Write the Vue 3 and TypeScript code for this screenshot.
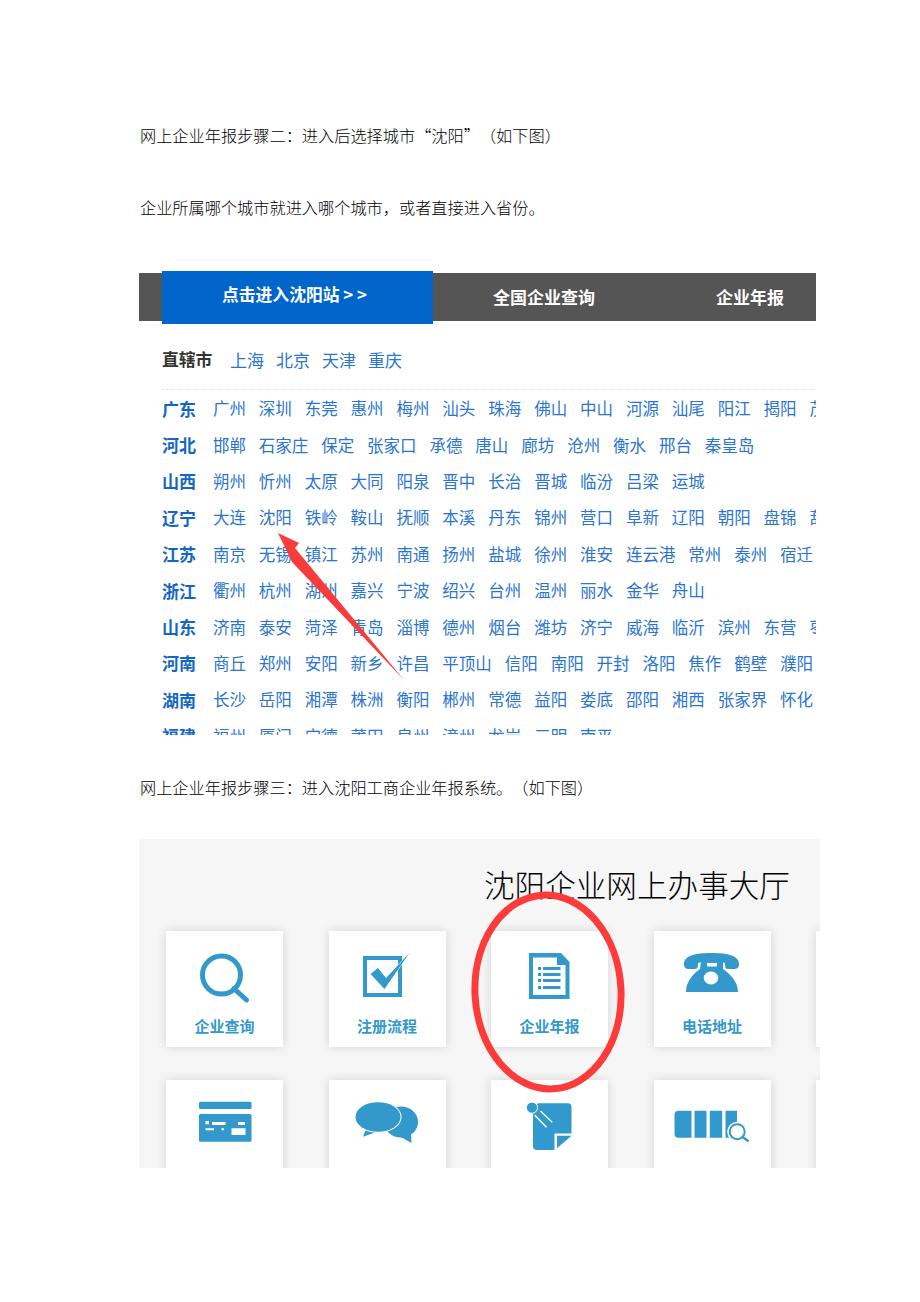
<script setup lang="ts">
interface Region { name: string; cities: string[] }
const split = (s: string) => s.split(' ')
const direct = split('上海 北京 天津 重庆')
const regions: Region[] = [
  { name: '广东', cities: split('广州 深圳 东莞 惠州 梅州 汕头 珠海 佛山 中山 河源 汕尾 阳江 揭阳 茂名') },
  { name: '河北', cities: split('邯郸 石家庄 保定 张家口 承德 唐山 廊坊 沧州 衡水 邢台 秦皇岛') },
  { name: '山西', cities: split('朔州 忻州 太原 大同 阳泉 晋中 长治 晋城 临汾 吕梁 运城') },
  { name: '辽宁', cities: split('大连 沈阳 铁岭 鞍山 抚顺 本溪 丹东 锦州 营口 阜新 辽阳 朝阳 盘锦 葫芦岛') },
  { name: '江苏', cities: split('南京 无锡 镇江 苏州 南通 扬州 盐城 徐州 淮安 连云港 常州 泰州 宿迁') },
  { name: '浙江', cities: split('衢州 杭州 湖州 嘉兴 宁波 绍兴 台州 温州 丽水 金华 舟山') },
  { name: '山东', cities: split('济南 泰安 菏泽 青岛 淄博 德州 烟台 潍坊 济宁 威海 临沂 滨州 东营 枣庄') },
  { name: '河南', cities: split('商丘 郑州 安阳 新乡 许昌 平顶山 信阳 南阳 开封 洛阳 焦作 鹤壁 濮阳') },
  { name: '湖南', cities: split('长沙 岳阳 湘潭 株洲 衡阳 郴州 常德 益阳 娄底 邵阳 湘西 张家界 怀化') },
  { name: '福建', cities: split('福州 厦门 宁德 莆田 泉州 漳州 龙岩 三明 南平') }
]
</script>

<template>
  <div class="page" lang="zh-CN">
    <p class="line">网上企业年报步骤二：进入后选择城市“沈阳”（如下图）</p>
    <p class="line second">企业所属哪个城市就进入哪个城市，或者直接进入省份。</p>

    <section class="shot-city">
      <nav class="nav">
        <div class="tab">点击进入沈阳站 &gt; &gt;</div>
        <div class="nav-item first">全国企业查询</div>
        <div class="nav-item">企业年报</div>
      </nav>
      <div class="direct">
        <strong>直辖市</strong>
        <span v-for="c in direct" :key="c">{{ c }}</span>
      </div>
      <div class="rows">
        <div v-for="r in regions" :key="r.name" class="row">
          <strong>{{ r.name }}</strong>
          <span v-for="c in r.cities" :key="c">{{ c }}</span>
        </div>
      </div>
      <svg class="arrow" viewBox="0 0 160 170" width="160" height="170">
        <path d="M14 4 L35 14 L31 19 L140 151 L28 33 Z" fill="#f83c3c" />
      </svg>
    </section>

    <p class="line third">网上企业年报步骤三：进入沈阳工商企业年报系统。（如下图）</p>

    <section class="shot-hall">
      <h1>沈阳企业网上办事大厅</h1>
      <div class="grid">
        <div class="card">
          <svg viewBox="0 0 60 60" width="60" height="60"><circle cx="26.5" cy="26" r="19" fill="none" stroke="#3399cc" stroke-width="5"/><path d="M39 39.5 L51.5 51" stroke="#3399cc" stroke-width="5" stroke-linecap="round"/></svg>
          <b>企业查询</b>
        </div>
        <div class="card">
          <svg viewBox="0 0 60 60" width="60" height="60"><path d="M6 7 H45 V48 H6 Z M10 11 V44 H41 V11 Z" fill="#3399cc" fill-rule="evenodd"/><path d="M13.5 25 L21 19 L29 29 L52.5 4 L27.5 40 Z" fill="#3399cc" stroke="#fff" stroke-width="1" paint-order="stroke"/></svg>
          <b>注册流程</b>
        </div>
        <div class="card">
          <svg viewBox="0 0 60 60" width="60" height="60"><path d="M9 4 H41 L49.5 13 V50 H9 Z" fill="#3399cc"/><path d="M13 8.5 H37 V16 H45.5 V46 H13 Z" fill="#fff"/><path d="M18 18 H21 V21 H18 Z M23 18 H40.5 V21 H23 Z M18 24 H21 V27 H18 Z M23 24 H40.5 V27 H23 Z M18 30 H21 V33 H18 Z M23 30 H40.5 V33 H23 Z M18 37 H21 V40 H18 Z M23 37 H40.5 V40 H23 Z" fill="#3399cc"/></svg>
          <b>企业年报</b>
        </div>
        <div class="card">
          <svg viewBox="0 0 60 60" width="60" height="60"><path d="M2 15 C2 7 12 4 29.5 4 C47 4 57 7 57 15 C57 19 55 20 52 20 L46 20 C43 20 43 17 43 14 C36 12 23 12 16 14 C16 17 16 20 13 20 L7 20 C4 20 2 19 2 15 Z" fill="#3399cc"/><path d="M19 12 H41 V20 C47 24 56 32 56 43 H4 C4 32 12 24 18 20 Z" fill="#3399cc"/><path d="M25 14 H35 V17.5 H25 Z" fill="#fff"/><ellipse cx="29" cy="29" rx="7.3" ry="6.5" fill="#fff"/></svg>
          <b>电话地址</b>
        </div>
        <div class="card clipped"></div>
        <div class="card">
          <svg viewBox="0 0 60 60" width="60" height="60"><rect x="4" y="3.7" width="52.5" height="7.3" rx="1.5" fill="#3399cc"/><rect x="4" y="16" width="52.5" height="27.7" rx="1.5" fill="#3399cc"/><path d="M10.5 23 H14 V26.3 H10.5 Z M17 24 H30.5 V27 H17 Z M43 24 H50 V27 H43 Z M10.5 30.3 H19 V32.3 H10.5 Z M26.5 30.3 H29 V32.3 H26.5 Z M36.5 30.3 H50.5 V37 H36.5 Z" fill="#fff"/></svg>
        </div>
        <div class="card">
          <svg viewBox="0 0 66 60" width="66" height="60"><ellipse cx="47" cy="24" rx="17" ry="15.5" fill="#3399cc"/><path d="M45 38 L57 36 L57.5 45 Z" fill="#3399cc"/><path d="M12 31 L9 38.7 L24 33.5 Z" fill="#3399cc"/><ellipse cx="24" cy="19" rx="22.5" ry="14.8" fill="#3399cc" stroke="#fff" stroke-width="2" paint-order="stroke"/></svg>
        </div>
        <div class="card">
          <svg viewBox="0 0 60 60" width="60" height="60"><path d="M18 5.3 H48 Q51.5 5.3 51.5 9 V35.5 H34.5 V52 H17 Q13 52 13 48 V12 Z" fill="#3399cc"/><path d="M37 37.7 H51.5 L37 50.3 Z" fill="#3399cc"/><circle cx="12" cy="9.7" r="5.6" fill="#3399cc" stroke="#fff" stroke-width="1"/><path d="M14.5 17 L26.5 29.3 M20.5 13 L32.2 24.3" stroke="#fff" stroke-width="1.4" fill="none"/></svg>
        </div>
        <div class="card">
          <svg viewBox="0 0 76 60" width="76" height="60"><path d="M4.5 12.7 H17.5 V39.7 H4.5 Q0.5 39.7 0.5 35.7 V16.7 Q0.5 12.7 4.5 12.7 Z M20.5 12.7 H32.5 V39.7 H20.5 Z M35.8 12.7 H48.2 V39.7 H35.8 Z M51.5 12.7 H63 V39.7 H51.5 Z" fill="#3399cc"/><circle cx="63.2" cy="33.7" r="10" fill="#fff"/><circle cx="63.2" cy="33.7" r="7.5" fill="#fff" stroke="#3399cc" stroke-width="2"/><path d="M68.6 39 L73.8 42.7" stroke="#3399cc" stroke-width="2.4" stroke-linecap="round"/></svg>
        </div>
        <div class="card clipped"></div>
      </div>
      <svg class="ring" viewBox="0 0 160 206" width="160" height="206">
        <ellipse cx="80" cy="103" rx="73" ry="97" transform="rotate(-3 80 103)" fill="none" stroke="#fd3b3b" stroke-width="7"/>
      </svg>
    </section>
  </div>
</template>

<style scoped>
.page {
  width: 920px;
  height: 1302px;
  padding-top: 123px;
  box-sizing: border-box;
  background: #fff;
  font-family: "Noto Sans CJK SC", sans-serif;
  text-spacing-trim: space-all;
  overflow: hidden;
}
.line {
  margin: 0 0 0 140px;
  font-size: 16.2px;
  line-height: 24px;
  font-weight: 300;
  color: #000;
  white-space: nowrap;
  font-variant-east-asian: full-width;
}
.second { margin-top: 48px; }
.third { margin-top: 40px; }

.shot-city {
  position: relative;
  margin: 52px 0 0 139px;
  width: 677px;
  height: 464px;
  overflow: hidden;
}
.nav {
  display: flex;
  align-items: center;
  height: 48px;
  margin: 2px 0 3px;
  padding-left: 23px;
  background: #555;
  color: #fff;
  font-size: 17px;
  font-weight: 700;
  white-space: nowrap;
}
.tab {
  width: 271px;
  height: 53px;
  margin-top: 1px;
  padding: 0 0 7px 60px;
  box-sizing: border-box;
  display: flex;
  align-items: center;
  white-space: pre;
  background: #0066cc;
  font-size: 16.8px;
}
.nav-item { margin-left: 121px; padding-bottom: 1px; }
.nav-item.first { margin-left: 60px; }
.direct {
  display: flex;
  align-items: center;
  gap: 12px;
  height: 60px;
  padding: 5px 0 0 23px;
  color: #2b75d0;
  font-size: 17px;
  font-weight: 400;
}
.direct strong {
  width: 51px;
  margin-right: 5px;
  color: #333;
  font-size: 16.8px;
  font-weight: 700;
}
.rows {
  margin-left: 23px;
  border-top: 1px dotted #e4e4e4;
}
.row {
  display: flex;
  align-items: center;
  gap: 12.9px;
  height: 36.4px;
  white-space: nowrap;
  color: #2b75d0;
  font-size: 16.5px;
  font-weight: 400;
}
.row span { flex: none; }
.row strong {
  flex: none;
  width: 38px;
  color: #1466c6;
  font-size: 17px;
  font-weight: 700;
}
.arrow {
  position: absolute;
  left: 125px;
  top: 258px;
}

.shot-hall {
  position: relative;
  margin: 40px 0 0 139px;
  width: 681px;
  height: 329px;
  background: #f6f6f6;
  overflow: hidden;
}
.shot-hall h1 {
  margin: 0;
  padding: 23px 0 0 345px;
  height: 68px;
  box-sizing: border-box;
  font-size: 30.6px;
  line-height: 44px;
  font-weight: 300;
  color: #000;
  white-space: nowrap;
}
.grid {
  display: grid;
  grid-template-columns: repeat(5, 117px);
  grid-auto-rows: 116px;
  column-gap: 45.5px;
  row-gap: 33px;
  padding-left: 27px;
  margin-top: 24px;
}
.card {
  display: flex;
  flex-direction: column;
  align-items: center;
  padding-top: 18px;
  box-sizing: border-box;
  background: #fff;
  box-shadow: 0 0 10px rgba(0, 0, 0, 0.14);
}
.card b {
  margin-top: 7px;
  font-size: 15px;
  line-height: 20px;
  font-weight: 700;
  color: #3399cc;
}
.ring {
  position: absolute;
  left: 329px;
  top: 50px;
}
</style>
